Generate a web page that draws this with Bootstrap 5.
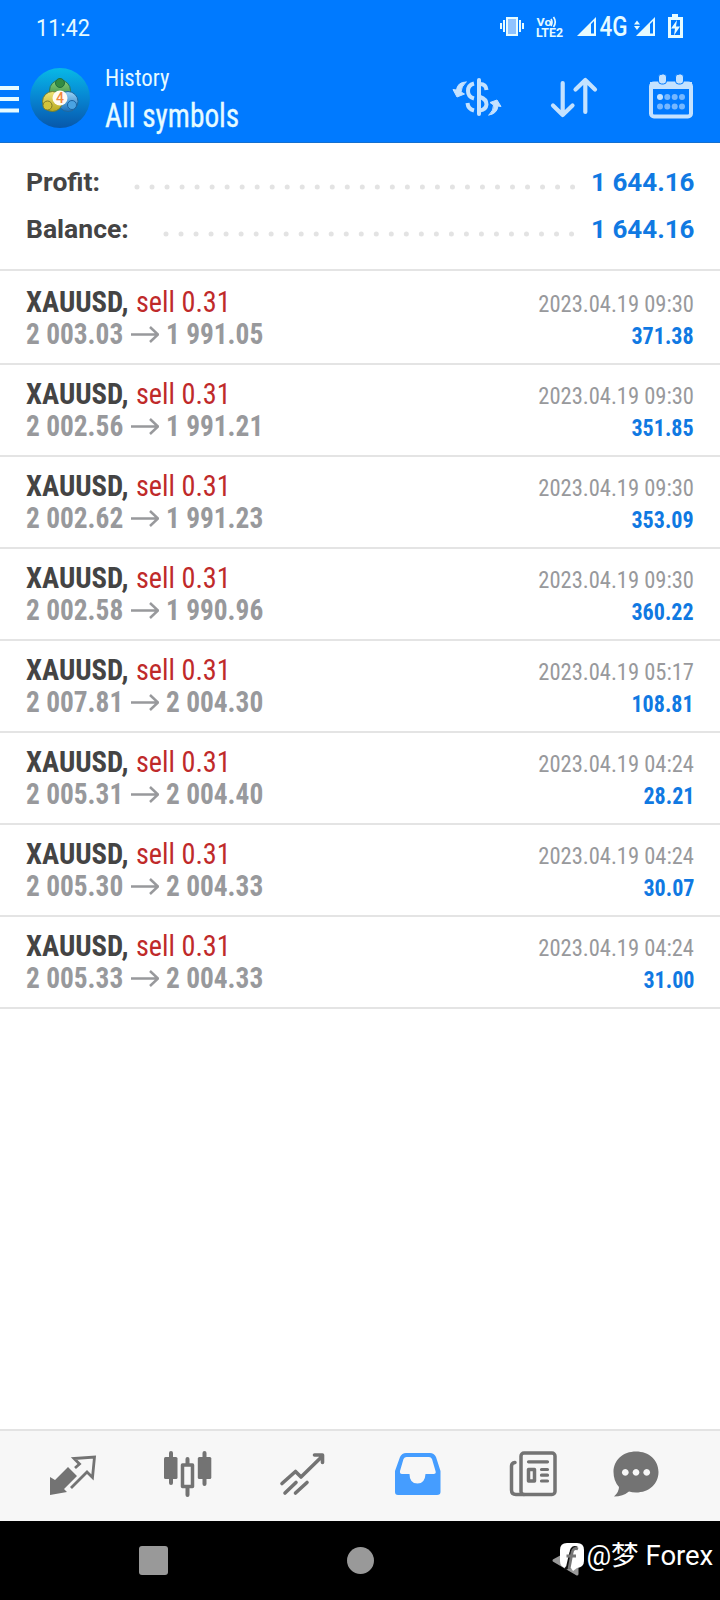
<!DOCTYPE html>
<html lang="en">
<head>
<meta charset="utf-8">
<meta name="viewport" content="width=device-width, initial-scale=1">
<title>History</title>
<link rel="stylesheet" href="https://cdn.jsdelivr.net/npm/bootstrap@5.3.0/dist/css/bootstrap.min.css">
<style>
body{font-family:Roboto,"Noto Sans CJK SC",sans-serif;background:#fff;color:#444;width:720px;height:1600px;overflow:hidden}
svg{display:block;flex:none}
.topbar{background:#007aff;height:143px;border-bottom:1px solid #1470cf;color:#e6fbff}
.statusbar{height:54px;padding-left:36px}
.cond{font-stretch:75%;font-family:"Roboto Condensed",Roboto,"Noto Sans CJK SC",sans-serif}
.fit{display:inline-block;white-space:pre;transform-origin:0 50%}
.fit-end{transform-origin:100% 50%}
.clock{font-size:24.5px;line-height:56px;transform:scaleX(.885)}
.head-small{font-size:24px;line-height:36px;margin-top:6px}
.head-small .fit{transform:scaleX(.95)}
.head-big{font-size:33px;line-height:40px}
.head-big .fit{transform:scaleX(.89);-webkit-text-stroke:.3px}
.summary{height:128px;border-bottom:2px solid #e4e4e4;padding:15px 26px 0}
.sumline{height:47px;font-size:26.5px;line-height:47px;font-weight:700}
.lab-profit{width:108px}
.lab-balance{width:136.500px}
.dots{margin-top:11px}
.total{transform:scaleX(.98)}
.blue{color:#1079e2}
.deal{height:92px;border-bottom:2px solid #e4e4e4;padding:13px 26px 0;font-size:30px;line-height:32px}
.deal:first-child{height:94px;padding-top:15px}
.sym{transform:scaleX(.955);width:109.500px}
.sell{color:#bf2a2a;transform:scaleX(.94)}
.grey{color:#98999c}
.price{transform:scaleX(.912);width:97px}
.side{font-size:24px;padding-top:2px}
.stamp{transform:scaleX(.938)}
.gain{transform:scaleX(.92)}
.arrow{margin:0 7px}
.tabs{height:92px;border-top:2px solid #e3e3e3;background:#f7f7f7}
.sysnav{height:79px;background:#000}
.signature{right:7px;top:14px;color:#fff;font-size:27.5px;line-height:41px;letter-spacing:-.1px;word-spacing:.5px}
</style>
</head>
<body class="d-flex flex-column">
<header class="topbar flex-shrink-0">
  <div class="statusbar d-flex justify-content-between">
    <span class="clock fit">11:42</span>
    <svg width="220" height="54" viewBox="500 0 220 54" fill="#e6fbff">
      <path d="M500 23h2v6h-2zM503 20h2v12h-2zM519 20h2v12h-2zM522 23h2v6h-2z"/>
      <rect x="507" y="18" width="10" height="17" fill="#8fc3ff" stroke="#e6fbff" stroke-width="2"/>
      <text x="536.500" y="25.500" font-size="11.500" font-weight="700" textLength="15" lengthAdjust="spacingAndGlyphs">Vo</text>
      <path d="M551 19q2 3 0 7M553.500 17q3.500 5 0 10" fill="none" stroke="#e6fbff" stroke-width="1.700"/>
      <text x="536" y="37.300" font-size="12.500" font-weight="700" textLength="27" lengthAdjust="spacingAndGlyphs">LTE2</text>
      <path d="M577 36L596 17V36ZM591 24V33.500H594V21Z" fill-rule="evenodd"/>
      <text x="599.500" y="36" font-size="27" font-weight="500" textLength="28" lengthAdjust="spacingAndGlyphs">4G</text>
      <path d="M634 24.500l3-4 3 4zM634 26l3 4 3-4z"/>
      <path d="M636 36L655 17V36ZM650 24V33.500H653V21Z" fill-rule="evenodd"/>
      <path fill-rule="evenodd" d="M668 17h4v-3h6v3h5v21h-15zM671 20v15h9V20z"/>
      <path d="M677 20l-6 8.500h4l-1 7 6-9h-4z"/>
    </svg>
  </div>
  <div class="d-flex">
    <svg width="105" height="88" viewBox="0 54 105 88">
      <defs>
        <linearGradient id="disc" x2="0" y2="1"><stop stop-color="#08b9e6"/><stop offset=".5" stop-color="#0785d2"/><stop offset="1" stop-color="#0757aa"/></linearGradient>
        <linearGradient id="gr" x2="0" y2="1"><stop stop-color="#8ed07a"/><stop offset="1" stop-color="#23813d"/></linearGradient>
        <linearGradient id="ye" x2="0" y2="1"><stop stop-color="#efe478"/><stop offset="1" stop-color="#b7a81d"/></linearGradient>
        <linearGradient id="bl" x2="0" y2="1"><stop stop-color="#9bd5f6"/><stop offset="1" stop-color="#1870bd"/></linearGradient>
      </defs>
      <path d="M0 86h19v4H0zM0 97h19v4H0zM0 108.500h19v4H0z" fill="#e6fbff"/>
      <circle cx="60" cy="98" r="30" fill="url(#disc)"/>
      <circle cx="60" cy="90.500" r="10.500" fill="url(#gr)" stroke="#2d7952"/>
      <circle cx="68" cy="101.500" r="10" fill="url(#bl)" stroke="#21689d"/>
      <circle cx="52.500" cy="101.500" r="10" fill="url(#ye)" stroke="#6f7c32"/>
      <circle cx="60" cy="83" r="4.500" fill="#338c42" stroke="#1f6d3c"/>
      <circle cx="47.500" cy="105.500" r="4.500" fill="#d3c33a" stroke="#7d7a2a"/>
      <circle cx="72" cy="105" r="4.500" fill="#4aa3e2" stroke="#1b62a0"/>
      <circle cx="60" cy="98" r="7.500" fill="#fffaf2"/>
      <text x="60" y="103" font-size="14" font-weight="500" text-anchor="middle" fill="#f0893c">4</text>
    </svg>
    <div class="cond d-flex flex-column">
      <span class="head-small"><span class="fit">History</span></span>
      <span class="head-big"><span class="fit">All symbols</span></span>
    </div>
    <svg class="ms-auto" width="290" height="88" viewBox="430 54 290 88" fill="none" stroke="#c4e2ff" stroke-linecap="round" stroke-linejoin="round">
      <path d="M479 80V114" stroke-width="4"/>
      <path d="M474 83.500Q468 85 468 91Q468 97 474 98.500M467.500 103Q468 109 474 110.500M480 84Q486 84 486.500 90M480 97Q486.500 99 486.500 104.500Q486 109.500 480 110.500" stroke-width="4" stroke-linecap="butt"/>
      <path d="M466 82Q457.500 82 456.500 90L453 89.500L457 97L464.500 94L461 92Q461 87 466 82ZM489 115Q497 114 498 106L501 106.500L497 100L490 102.500L493.500 105Q494 110 489 115Z" fill="#c4e2ff" stroke-width="1"/>
      <path d="M562.700 83V115M553 105.500L562.700 115L572.500 105.500M585.300 112V81M575.500 89.500L585.300 80L595 89.500" stroke-width="4.200"/>
      <rect x="651" y="83.500" width="40" height="33" rx="3" stroke-width="4"/>
      <path d="M650 82H692V89H650Z" fill="#c4e2ff" stroke="none"/>
      <rect x="658.500" y="74" width="8" height="10" rx="3" fill="#c4e2ff" stroke="#007aff" stroke-width="1"/>
      <rect x="675.500" y="74" width="8" height="10" rx="3" fill="#c4e2ff" stroke="#007aff" stroke-width="1"/>
      <g fill="#75b7ff" stroke="none"><circle cx="660" cy="97" r="3" fill="#c4e2ff"/><circle cx="667.300" cy="97" r="3"/><circle cx="674.700" cy="97" r="3"/><circle cx="682" cy="97" r="3"/><circle cx="660" cy="106.500" r="3"/><circle cx="667.300" cy="106.500" r="3"/><circle cx="674.700" cy="106.500" r="3"/><circle cx="682" cy="106.500" r="3"/></g>
    </svg>
  </div>
</header>
<section class="summary flex-shrink-0">
  <div class="sumline d-flex align-items-center">
    <span class="lab-profit">Profit:</span>
    <svg width="442" height="6" class="dots"><path d="M3 3H439" stroke="#e3e3e3" stroke-width="5" stroke-linecap="round" stroke-dasharray="0 15.020"/></svg>
    <span class="blue total fit fit-end ms-auto">1 644.16</span>
  </div>
  <div class="sumline d-flex align-items-center">
    <span class="lab-balance">Balance:</span>
    <svg width="412" height="6" class="dots"><path d="M3 3H409" stroke="#e3e3e3" stroke-width="5" stroke-linecap="round" stroke-dasharray="0 15.020"/></svg>
    <span class="blue total fit fit-end ms-auto">1 644.16</span>
  </div>
</section>
<main class="cond flex-grow-1" id="deals"></main>
<nav class="tabs flex-shrink-0">
  <svg width="720" height="90" viewBox="0 1431 720 90" fill="none" stroke="#737373" stroke-linecap="round" stroke-linejoin="round">
    <path d="M50 1477L55 1480L68 1467L77 1476L64 1489L67 1492L50 1495Z" fill="#737373" stroke="none"/>
    <path d="M75 1468L79.500 1464L74 1458.500L94.500 1457L92.500 1477.500L87 1472L71 1488" stroke-width="2.800" stroke-linecap="butt" stroke-linejoin="miter"/>
    <path d="M171 1453V1483M204.500 1453V1484M187.500 1459V1464M187.500 1488V1495" stroke-width="4"/>
    <rect x="164" y="1457" width="13.500" height="22" rx="1.500" fill="#737373" stroke="none"/>
    <rect x="197.800" y="1457" width="13.500" height="22" rx="1.500" fill="#737373" stroke="none"/>
    <rect x="182.500" y="1465" width="10" height="21.500" stroke-width="3.500"/>
    <path d="M282 1483.500L295.500 1471.500L301 1477L322.500 1456M314.500 1455H322.500V1462.500M285 1493L296 1482.500M295.500 1493L307 1482.500" stroke-width="3.600"/>
    <path fill="#459dff" stroke="none" fill-rule="evenodd" d="M406 1453H430Q434 1453 436 1457L440.500 1471V1492Q440.500 1495 437 1495H398Q395 1495 395 1492V1471L400 1457Q402 1453 406 1453ZM406.500 1457Q404.500 1457 403.500 1459L400 1471Q399.500 1474 402 1474H409.500Q409.500 1483.500 417.500 1483.500Q425 1483.500 425.500 1474H433.500Q436.500 1474 435.500 1471L432 1459Q431 1457 429 1457Z"/>
    <rect x="521" y="1453" width="34" height="41.500" rx="3" stroke-width="3.500"/>
    <path d="M515 1462.500Q511.500 1463 511.500 1466V1490Q511.500 1494.500 516 1494.500H524" stroke-width="3.500"/>
    <path d="M528.500 1461.800H547.500M541.500 1469.500H547.500M541.500 1475.200H547.500M541.500 1481H547.500" stroke-width="3.200"/>
    <rect x="528.500" y="1469.500" width="6" height="11.500" stroke-width="3.500"/>
    <path fill="#737373" stroke="none" fill-rule="evenodd" d="M636 1451.500C649 1451.500 658.500 1460 658.500 1472C658.500 1484 649 1492.500 636 1492.500Q632 1492.500 629 1491.500Q623 1496.500 614 1496.500Q619 1492 619 1487Q613.500 1481 613.500 1472C613.500 1460 623 1451.500 636 1451.500ZM625.300 1469a3.400 3.400 0 1 0 .01 0ZM636 1469a3.400 3.400 0 1 0 .01 0ZM646.700 1469a3.400 3.400 0 1 0 .01 0Z"/>
  </svg>
</nav>
<footer class="sysnav flex-shrink-0 position-relative">
  <svg width="720" height="79" viewBox="0 1521 720 79">
    <rect x="139" y="1546" width="29" height="29" rx="3" fill="#999"/>
    <circle cx="360.500" cy="1560.500" r="13.500" fill="#999"/>
    <path d="M554 1560.500L577 1548V1574Z" fill="#999" stroke="#999" stroke-width="3" stroke-linejoin="round"/>
    <path d="M567 1543H577Q584 1543 584 1550V1561Q584 1567 577 1568L573 1571L571 1568H567Q560 1568 560 1561V1550Q560 1543 567 1543Z" fill="#fff"/>
    <path d="M577 1548Q572 1546 571 1552L568 1565Q567.500 1569 565 1568" fill="none" stroke="#111" stroke-width="3"/>
    <path d="M578 1549Q573 1547 572 1553L569 1569M566.500 1556H576" fill="none" stroke="#777" stroke-width="2.800"/>
  </svg>
  <span class="signature position-absolute">@梦 Forex</span>
</footer>
<script src="https://cdn.jsdelivr.net/npm/bootstrap@5.3.0/dist/js/bootstrap.bundle.min.js"></script>
<script>
const deals=[
 ["2 003.03","1 991.05","09:30","371.38"],
 ["2 002.56","1 991.21","09:30","351.85"],
 ["2 002.62","1 991.23","09:30","353.09"],
 ["2 002.58","1 990.96","09:30","360.22"],
 ["2 007.81","2 004.30","05:17","108.81"],
 ["2 005.31","2 004.40","04:24","28.21"],
 ["2 005.30","2 004.33","04:24","30.07"],
 ["2 005.33","2 004.33","04:24","31.00"]];
document.getElementById("deals").innerHTML=deals.map(([a,b,t,p])=>`<article class="deal d-flex justify-content-between">
<div><div class="d-flex"><b class="sym fit">XAUUSD,</b><span class="sell fit">sell 0.31</span></div>
<div class="grey d-flex"><b class="price fit">${a}</b><svg class="arrow" width="29" height="32" viewBox="0 0 29 32" fill="none" stroke="#98999c" stroke-width="2.500"><path d="M1 16.500H27.500M20 9L28 16.500L20 24"/></svg><b class="price fit">${b}</b></div></div>
<div class="side d-flex flex-column align-items-end"><span class="grey stamp fit fit-end">2023.04.19 ${t}</span><b class="blue gain fit fit-end">${p}</b></div></article>`).join("");
</script>
</body>
</html>
